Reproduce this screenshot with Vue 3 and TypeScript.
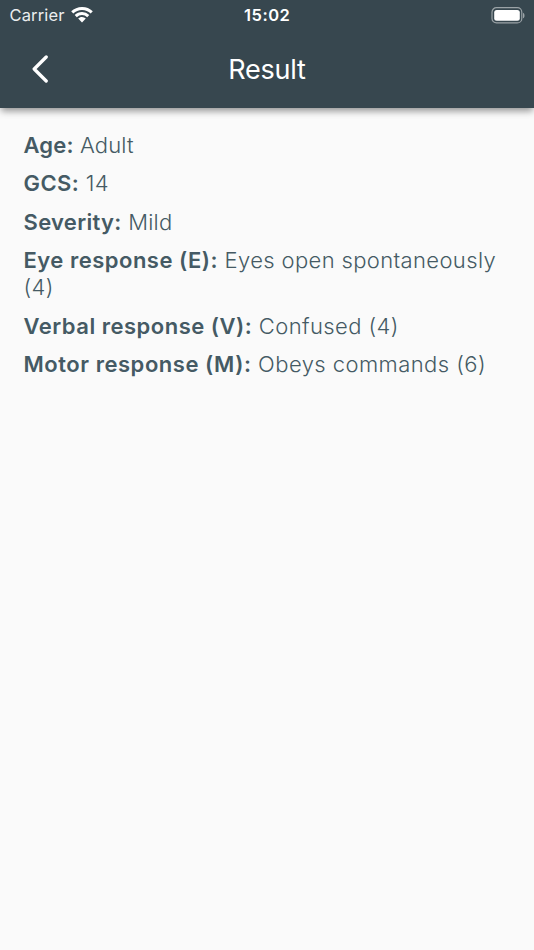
<script setup lang="ts">
interface ResultRow {
  label: string
  value: string
  labelTracking: number
  valueTracking: number
}

const rows: ResultRow[] = [
  { label: 'Age', value: 'Adult', labelTracking: 0.2, valueTracking: 0.1 },
  { label: 'GCS', value: '14', labelTracking: 0.4, valueTracking: 0.43 },
  { label: 'Severity', value: 'Mild', labelTracking: 0.32, valueTracking: 0.25 },
  { label: 'Eye response (E)', value: 'Eyes open spontaneously (4)', labelTracking: 0.5, valueTracking: 0.36 },
  { label: 'Verbal response (V)', value: 'Confused (4)', labelTracking: 0.5, valueTracking: 0.4 },
  { label: 'Motor response (M)', value: 'Obeys commands (6)', labelTracking: 0.54, valueTracking: 0.43 },
]
</script>

<template>
  <div class="screen">
    <header class="top">
      <div class="status">
        <div class="carrier">
          <span>Carrier</span>
          <svg class="wifi" viewBox="0 0 22 16" aria-hidden="true">
            <path d="M11 0C6.9 0 3 1.6.2 4.3L2.3 6.5A12.5 12.5 0 0 1 19.7 6.5L21.8 4.3A15.5 15.5 0 0 0 11 0Z" />
            <path d="M11 5.1C8.2 5.1 5.6 6.2 3.7 8L5.8 10.2A7.4 7.4 0 0 1 16.2 10.2L18.3 8A10.5 10.5 0 0 0 11 5.1Z" />
            <path d="M11 10.1C9.5 10.1 8.2 10.7 7.2 11.6L11 15.6L14.8 11.6A5.6 5.6 0 0 0 11 10.1Z" />
          </svg>
        </div>
        <span class="clock">15:02</span>
        <svg class="battery" viewBox="0 0 34 17" aria-hidden="true">
          <rect class="shell" x="1" y=".7" width="29.8" height="15.2" rx="4.5" />
          <rect x="3.2" y="2.9" width="25.6" height="10.8" rx="2.5" />
          <path class="tip" d="M32 5.7C34 6.4 34 10.6 32 11.3Z" />
        </svg>
      </div>
      <div class="bar">
        <button class="back" aria-label="Back">
          <svg viewBox="0 0 18 28"><path d="M15.2 2L3.2 14L15.2 26" /></svg>
        </button>
        <h1>Result</h1>
      </div>
    </header>
    <main class="results">
      <p v-for="row in rows" :key="row.label" :style="{ letterSpacing: `${row.valueTracking}px` }"><strong :style="{ letterSpacing: `${row.labelTracking}px` }">{{ row.label }}:</strong> {{ row.value }}</p>
    </main>
  </div>
</template>

<style>
body { background: #fafafa; }
</style>

<style scoped>
.screen { min-height: 950px; background: #fafafa; font-family: Inter, sans-serif; }
.top { height: 108px; background: #37474f; color: #fff; box-shadow: 0 4px 7px -1px rgba(0, 0, 0, .42); }
.status { height: 30px; display: grid; grid-template-columns: 1fr auto 1fr; align-items: center; padding: 0 9px 0 9.5px; }
.carrier { display: flex; align-items: center; gap: 6px; font-size: 16.5px; letter-spacing: .15px; }
.carrier span { color: #eceeef; }
.wifi { width: 22px; height: 16px; fill: #fff; }
.clock { font-size: 16.5px; font-weight: 600; letter-spacing: .5px; }
.battery { width: 34px; height: 17px; justify-self: end; fill: #fff; }
.shell { fill: none; stroke: #9ba3a7; stroke-width: 1.2; }
.tip { fill: #9ba3a7; }
.bar { height: 78px; display: grid; grid-template-columns: 80px 1fr 80px; align-items: center; }
.back { display: flex; justify-content: center; padding: 0; border: 0; background: none; }
.back svg { width: 18px; height: 28px; fill: none; stroke: #fff; stroke-width: 3.3; stroke-linecap: round; stroke-linejoin: round; }
h1 { margin: 0; padding-top: 1px; text-align: center; font-size: 27px; font-weight: 400; line-height: 32px; letter-spacing: -.2px; }
.results { padding: 24px 24px 0 23.5px; display: flex; flex-direction: column; gap: 11.4px; color: #455a64; }
p { margin: 0; font-size: 22px; line-height: 27px; font-weight: 300; }
strong { font-weight: 600; }
</style>
